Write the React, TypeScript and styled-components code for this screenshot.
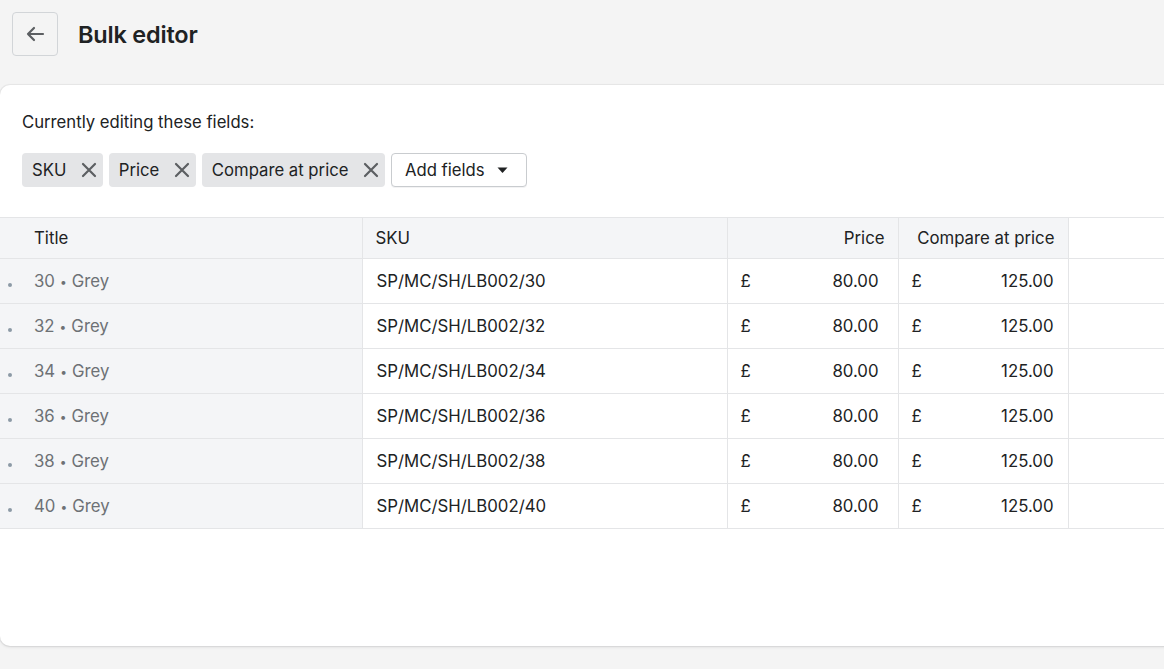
import React, { FC } from 'react';
import styled, { createGlobalStyle } from 'styled-components';

const COLOR_PAGE = '#f4f4f4';
const COLOR_TEXT = '#202223';
const COLOR_SUBDUED = '#6d7175';
const COLOR_ICON = '#5c5f62';
const COLOR_BORDER = '#e4e5e7';
const COLOR_CELL_GREY = '#f4f5f7';

const GlobalStyle = createGlobalStyle`
    html, body {
        margin: 0;
        padding: 0;
        background: ${ COLOR_PAGE };
        overflow: hidden;
    }
    body {
        font-family: Inter, "Noto Sans", "Liberation Sans", sans-serif;
        color: ${ COLOR_TEXT };
        -webkit-font-smoothing: antialiased;
    }
`;

const Page = styled.div`
    width: 1164px;
    height: 669px;
    overflow: hidden;
    display: flex;
    flex-direction: column;
`;

const TopBar = styled.header`
    align-items: center;
    display: flex;
    gap: 20px;
    height: 68px;
    padding: 0 12px;
    box-sizing: border-box;
`;

const BackButton = styled.button`
    align-items: center;
    background: ${ COLOR_PAGE };
    border: 1px solid #d2d5d8;
    border-radius: 4px;
    box-sizing: border-box;
    display: flex;
    height: 44px;
    justify-content: center;
    padding: 0;
    width: 46px;
`;

const PageTitle = styled.h1`
    font-size: 23.5px;
    font-weight: 600;
    letter-spacing: -0.2px;
    margin: 0;
`;

const Card = styled.section`
    background: #ffffff;
    border-radius: 10px 0 0 10px;
    box-shadow: 0 0 0 1px rgba(63, 63, 68, 0.05), 0 1px 3px rgba(63, 63, 68, 0.15);
    display: flex;
    flex-direction: column;
    height: 561px;
    margin-top: 17px;
    margin-right: -20px;
`;

const FieldsSection = styled.div`
    padding: 27px 22px 30px;
`;

const FieldsLabel = styled.p`
    font-size: 16.7px;
    line-height: 20px;
    margin: 0 0 21px;
`;

const ChipRow = styled.div`
    display: flex;
    gap: 5.5px;
`;

const Chip = styled.span`
    align-items: center;
    background: ${ COLOR_BORDER };
    border-radius: 4px;
    box-sizing: border-box;
    display: inline-flex;
    font-size: 16.7px;
    gap: 15px;
    height: 34px;
    padding: 0 6px 0 10px;
`;

const ChipRemove = styled.span`
    display: flex;
`;

const AddButton = styled.button`
    align-items: center;
    background: #ffffff;
    border: 1px solid #c9cccf;
    border-radius: 4px;
    box-shadow: 0 1px 0 rgba(22, 29, 37, 0.05);
    box-sizing: border-box;
    color: ${ COLOR_TEXT };
    display: inline-flex;
    font-family: inherit;
    font-size: 16.7px;
    gap: 12px;
    height: 34px;
    padding: 0 18px 0 13px;
`;

const Table = styled.table`
    border-collapse: collapse;
    border-top: 1px solid ${ COLOR_BORDER };
    border-bottom: 1.5px solid ${ COLOR_BORDER };
    font-size: 16.8px;
    table-layout: fixed;
    width: 100%;
`;

const HeadCell = styled.th<{ $align?: 'left' | 'right'; $blank?: boolean }>`
    background: ${ ({ $blank }) => ($blank ? '#ffffff' : COLOR_CELL_GREY) };
    border-left: 1px solid ${ COLOR_BORDER };
    box-sizing: border-box;
    font-weight: 400;
    height: 41px;
    padding: 0 13px;
    text-align: ${ ({ $align }) => $align ?? 'left' };

    &:first-child {
        border-left: none;
        padding-left: 34px;
    }
`;

const Row = styled.tr`
    border-top: 1px solid ${ COLOR_BORDER };
`;

const TitleCell = styled.td`
    background: ${ COLOR_CELL_GREY };
    color: ${ COLOR_SUBDUED };
    height: 44px;
    padding: 0 0 0 34px;
    position: relative;
`;

const Separator = styled.span`
    display: inline-block;
    font-size: 12px;
    margin: 0 5px;
    vertical-align: 1px;
`;

const Dot = styled.span`
    background: #8c9aa6;
    border-radius: 50%;
    height: 4px;
    left: 8px;
    position: absolute;
    top: 24px;
    width: 4px;
`;

const Cell = styled.td`
    border-left: 1px solid ${ COLOR_BORDER };
    height: 44px;
    padding: 0 14px;
`;

const MoneyCell = styled(Cell)`
    padding: 0 14px 0 13px;
`;

const Money = styled.div`
    display: flex;
    justify-content: space-between;
`;

const BackArrow: FC = () => (
    <svg width="22" height="22" viewBox="0 0 22 22">
        <path d="M19 11H4M10 5l-6 6 6 6" fill="none" stroke={ COLOR_ICON } strokeWidth="2.2" strokeLinecap="round" strokeLinejoin="round" />
    </svg>
);

const CrossIcon: FC = () => (
    <svg width="16" height="16" viewBox="0 0 16 16">
        <path d="M2 2l12 12M14 2L2 14" stroke={ COLOR_ICON } strokeWidth="2.2" strokeLinecap="round" />
    </svg>
);

const Caret: FC = () => (
    <svg width="11" height="7" viewBox="0 0 11 7">
        <path d="M0.5 0.5h10L5.5 6z" fill={ COLOR_TEXT } />
    </svg>
);

const fields = ['SKU', 'Price', 'Compare at price'];
const sizes = [30, 32, 34, 36, 38, 40];

const App: FC = () => (
    <>
        <GlobalStyle />
        <Page>
            <TopBar>
                <BackButton aria-label="Back"><BackArrow /></BackButton>
                <PageTitle>Bulk editor</PageTitle>
            </TopBar>
            <Card>
                <FieldsSection>
                    <FieldsLabel>Currently editing these fields:</FieldsLabel>
                    <ChipRow>
                        { fields.map((field) => (
                            <Chip key={ field }>
                                { field }
                                <ChipRemove><CrossIcon /></ChipRemove>
                            </Chip>
                        )) }
                        <AddButton>Add fields <Caret /></AddButton>
                    </ChipRow>
                </FieldsSection>
                <Table>
                    <colgroup>
                        <col style={{ width: 362 }} />
                        <col style={{ width: 365 }} />
                        <col style={{ width: 171 }} />
                        <col style={{ width: 170 }} />
                        <col />
                    </colgroup>
                    <thead>
                        <tr>
                            <HeadCell>Title</HeadCell>
                            <HeadCell>SKU</HeadCell>
                            <HeadCell $align="right">Price</HeadCell>
                            <HeadCell $align="right">Compare at price</HeadCell>
                            <HeadCell $blank />
                        </tr>
                    </thead>
                    <tbody>
                        { sizes.map((size) => (
                            <Row key={ size }>
                                <TitleCell><Dot />{ size }<Separator>•</Separator>Grey</TitleCell>
                                <Cell>{ `SP/MC/SH/LB002/${size}` }</Cell>
                                <MoneyCell><Money><span>£</span><span style={{ paddingRight: 5 }}>80.00</span></Money></MoneyCell>
                                <MoneyCell><Money><span>£</span><span>125.00</span></Money></MoneyCell>
                                <Cell />
                            </Row>
                        )) }
                    </tbody>
                </Table>
            </Card>
        </Page>
    </>
);

export default App;
